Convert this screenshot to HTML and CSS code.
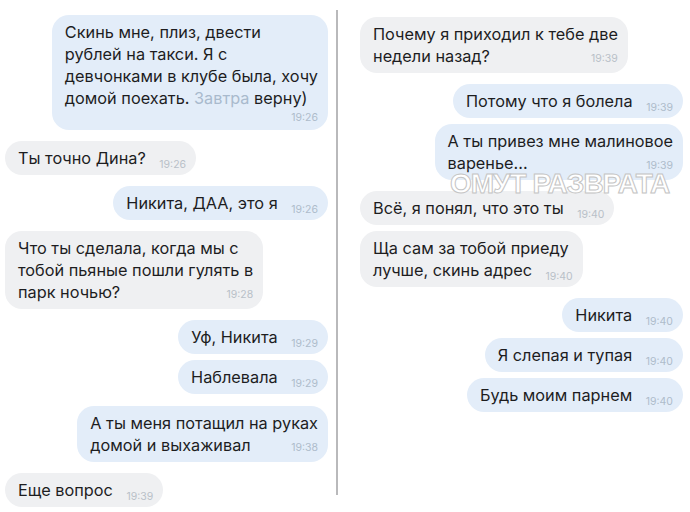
FILE: index.html
```html
<!DOCTYPE html>
<html lang="ru">
<head>
    <meta charset="UTF-8">
    <meta name="viewport" content="width=device-width, initial-scale=1.0">
    <title>Переписка</title>
    <link rel="stylesheet" href="styles.css">
</head>
<body>
    <div class="chats">
        <section class="panel panel-left">
            <div class="msg out">
                Скинь мне, плиз, двести<br>
                рублей на такси. Я с<br>
                девчонками в клубе была, хочу<br>
                домой поехать. <span class="link">Завтра</span> верну)
                <span class="time time-row">19:26</span>
            </div>
            <div class="msg in gap">Ты точно Дина? <span class="time">19:26</span></div>
            <div class="msg out gap">Никита, ДАА, это я <span class="time">19:26</span></div>
            <div class="msg in gap">
                Что ты сделала, когда мы с<br>
                тобой пьяные пошли гулять в<br>
                парк ночью? <span class="time time-end">19:28</span>
            </div>
            <div class="msg out gap">Уф, Никита <span class="time">19:29</span></div>
            <div class="msg out">Наблевала <span class="time">19:29</span></div>
            <div class="msg out gap-lg">
                А ты меня потащил на руках<br>
                домой и выхаживал <span class="time time-end">19:38</span>
            </div>
            <div class="msg in gap">Еще вопрос <span class="time">19:39</span></div>
        </section>

        <div class="divider"></div>

        <section class="panel panel-right">
            <div class="msg in">
                Почему я приходил к тебе две<br>
                недели назад? <span class="time time-end">19:39</span>
            </div>
            <div class="msg out gap">Потому что я болела <span class="time">19:39</span></div>
            <div class="msg out">
                А ты привез мне малиновое<br>
                варенье... <span class="time time-end">19:39</span>
            </div>
            <div class="msg in gap">Всё, я понял, что это ты <span class="time">19:40</span></div>
            <div class="msg in">
                Ща сам за тобой приеду<br>
                лучше, скинь адрес <span class="time">19:40</span>
            </div>
            <div class="msg out gap">Никита <span class="time">19:40</span></div>
            <div class="msg out">Я слепая и тупая <span class="time">19:40</span></div>
            <div class="msg out">Будь моим парнем <span class="time">19:40</span></div>
        </section>

        <div class="watermark">ОМУТ РАЗВРАТА</div>
    </div>
</body>
</html>
```

FILE: styles.css
```css
* {
    margin: 0;
    padding: 0;
    box-sizing: border-box;
}

body {
    font-family: Inter, Roboto, 'Noto Sans', sans-serif;
    background: #fff;
    color: #1d1d1f;
}

.chats {
    position: relative;
    display: flex;
    width: 690px;
    height: 512px;
    overflow: hidden;
}

.panel {
    display: flex;
    flex-direction: column;
    align-items: flex-start;
}

.panel-left {
    width: 336px;
    padding: 15px 8px 0 5px;
}

.panel-right {
    flex: 1;
    padding: 17px 7px 0 22px;
}

.divider {
    width: 2px;
    margin: 10px 0 17px;
    background: #b9b9bb;
}

.msg {
    font-size: 16.3px;
    line-height: 22px;
    padding: 6px 10px 6px 13px;
    border-radius: 17px;
    margin-top: 6px;
}

.msg:first-child {
    margin-top: 0;
}

.msg.gap {
    margin-top: 11px;
}

.msg.gap-lg {
    margin-top: 12px;
}

.in {
    background: #eff0f2;
}

.out {
    background: #e3edf9;
    align-self: flex-end;
}

.link {
    color: #a9bacd;
}

.time {
    display: inline-block;
    font-size: 10.5px;
    line-height: 1px;
    color: #b9c0c8;
    margin-left: 9px;
    vertical-align: -4px;
}

.out .time {
    color: #aebccb;
}

.time-end {
    float: right;
    line-height: 11px;
    margin-top: 8px;
}

.time-row {
    display: block;
    text-align: right;
    margin: 2px 0 0;
    line-height: 13px;
}

.watermark {
    position: absolute;
    left: 450px;
    top: 168px;
    font-family: 'Liberation Sans', Arial, sans-serif;
    font-weight: bold;
    font-size: 28px;
    letter-spacing: -1px;
    color: #fff;
    -webkit-text-stroke: 1px #c4c4c4;
}
```
